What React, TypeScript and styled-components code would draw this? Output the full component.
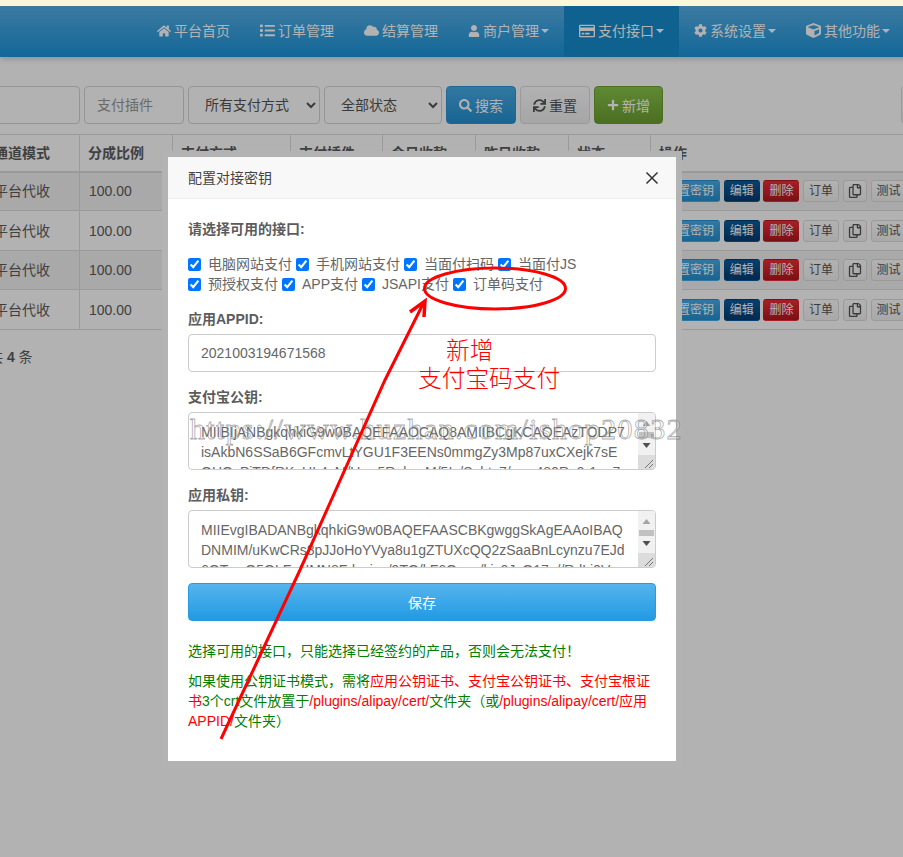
import React from "react";
import styled, { createGlobalStyle } from "styled-components";
import { FaHome, FaList, FaCloud, FaUser, FaRegCreditCard, FaCog, FaCube, FaSearch, FaSync, FaPlus, FaRegCopy } from "react-icons/fa";

const Global = createGlobalStyle`
  html, body { margin: 0; padding: 0; background: #fff; }
  body { font-family: "Liberation Sans", "Noto Sans CJK SC", sans-serif; font-size: 14px; line-height: 20px; color: #5c5c5c; }
  * { box-sizing: border-box; }
`;

const Page = styled.div`
  position: relative;
  width: 903px;
  height: 857px;
  overflow: hidden;
`;
const NoticeStrip = styled.div`
  position: relative;
  z-index: 3;
  height: 6px;
  background: #fdf7da;
`;
const NavBar = styled.nav`
  display: flex;
  height: 51px;
  width: 960px;
  padding-left: 142px;
  background: linear-gradient(#58b0e6, #1a94dc);
  box-shadow: 0 2px 6px rgba(0, 0, 0, 0.2);
`;
const NavItem = styled.a<{ $active?: boolean }>`
  display: flex;
  align-items: center;
  padding: 0 15px 2px;
  color: #fff;
  font-size: 14px;
  white-space: nowrap;
  background: ${(p) => (p.$active ? "#168dce" : "transparent")};
  svg { margin-right: 3px; flex: none; }
`;
const Caret = styled.i`
  width: 0;
  height: 0;
  margin-left: 2px;
  border-top: 4px solid #fff;
  border-left: 4px solid transparent;
  border-right: 4px solid transparent;
`;
const Toolbar = styled.div`
  display: flex;
  gap: 4px;
  width: 1000px;
  margin: 29px 0 0 -20px;
`;
const SearchInput = styled.input<{ $w: number }>`
  width: ${(p) => p.$w}px;
  height: 38px;
  padding: 0 12px;
  border: 1px solid #d6d6d6;
  border-radius: 4px;
  font: 14px "Liberation Sans", "Noto Sans CJK SC", sans-serif;
  &::placeholder { color: #999; }
`;
const SearchSelect = styled.select<{ $w: number }>`
  width: ${(p) => p.$w}px;
  height: 38px;
  padding: 0 12px;
  border: 1px solid #d6d6d6;
  border-radius: 4px;
  background: #fff;
  color: #555;
  font: 14px "Liberation Sans", "Noto Sans CJK SC", sans-serif;
`;
const ToolButton = styled.button<{ $kind: "blue" | "plain" | "green"; $w: number }>`
  display: flex;
  align-items: center;
  justify-content: center;
  gap: 3px;
  width: ${(p) => p.$w}px;
  height: 38px;
  padding: 0;
  border-radius: 4px;
  font: 14px "Liberation Sans", "Noto Sans CJK SC", sans-serif;
  border: 1px solid ${(p) => (p.$kind === "blue" ? "#2a92d6" : p.$kind === "green" ? "#6d9f31" : "#ddd")};
  color: ${(p) => (p.$kind === "plain" ? "#555" : "#fff")};
  background: ${(p) =>
    p.$kind === "blue"
      ? "linear-gradient(#48ade8, #2490d2)"
      : p.$kind === "green"
      ? "linear-gradient(#88c549, #6d9f31)"
      : "linear-gradient(#fff, #eee)"};
`;
const EdgeButton = styled(ToolButton)`
  margin-left: 234px;
`;
const TableWrap = styled.table`
  table-layout: fixed;
  width: 1009px;
  margin: 10px 0 0 -89px;
  border-collapse: collapse;
  th, td { text-align: left; border-left: 1px solid #ddd; }
  th { padding: 0 8px; height: 37px; font-weight: 700; border-top: 1px solid #ddd; border-bottom: 2px solid #ddd; white-space: nowrap; }
  td { padding: 0 9px; }
`;
const Row = styled.tr<{ $striped: boolean; $h: number }>`
  height: ${(p) => p.$h}px;
  background: ${(p) => (p.$striped ? "rgba(0,0,0,.05)" : "transparent")};
  td { border-bottom: 1px solid #ddd; white-space: nowrap; }
`;
const ModeCell = styled.td`
  && { padding-left: 82px; }
`;
const ModeHead = styled.th`
  && { padding-left: 82px; }
`;
const Actions = styled.div`
  display: flex;
  gap: 3.7px;
`;
const ActionButton = styled.span<{ $kind: "blue" | "navy" | "red" | "plain"; $tight?: boolean }>`
  display: flex;
  align-items: center;
  justify-content: center;
  height: 22px;
  padding: 0 ${(p) => (p.$tight ? 4 : 5)}px;
  border-radius: 3px;
  font-size: 12px;
  border: 1px solid ${(p) => (p.$kind === "plain" ? "#ddd" : "transparent")};
  color: ${(p) => (p.$kind === "plain" ? "#555" : "#fff")};
  background: ${(p) =>
    ({
      blue: "linear-gradient(#48ade8, #2490d2)",
      navy: "linear-gradient(#0b5c9f, #023c71)",
      red: "linear-gradient(#ed2e39, #b1171e)",
      plain: "linear-gradient(#fff, #f2f2f2)",
    }[p.$kind])};
`;
const Total = styled.div`
  margin: 17px 0 0 -11px;
  b { font-weight: 700; }
`;
const Backdrop = styled.div`
  position: absolute;
  inset: 6px 0 0 0;
  background: rgba(0, 0, 0, 0.3);
`;
const Modal = styled.div`
  position: absolute;
  left: 168px;
  top: 157px;
  width: 508px;
  height: 604px;
  background: #fff;
  box-shadow: 0 0 0 6px #b3b3b3;
`;
const ModalHead = styled.div`
  display: flex;
  align-items: center;
  justify-content: space-between;
  height: 42px;
  padding: 0 17px 0 20px;
  background: #f8f8f8;
  border-bottom: 1px solid #eee;
  color: #444;
`;
const ModalBody = styled.div`
  padding: 20px 20px 0;
`;
const FieldLabel = styled.div<{ $gap?: number }>`
  margin-bottom: ${(p) => p.$gap ?? 5}px;
  font-weight: 700;
  color: #5c5c5c;
`;
const Field = styled.div`
  margin-bottom: 15px;
`;
const CheckGroup = styled.div`
  display: flex;
  flex-wrap: wrap;
  column-gap: 4px;
`;
const CheckLabel = styled.label`
  display: flex;
  align-items: center;
  gap: 7px;
  height: 20px;
  color: #666;
  input { width: 13px; height: 13px; margin: 0; }
`;
const TextInput = styled.input`
  display: block;
  width: 100%;
  height: 38px;
  padding: 0 12px;
  border: 1px solid #ccc;
  border-radius: 4px;
  color: #666;
  font: 14px "Liberation Sans", "Noto Sans CJK SC", sans-serif;
`;
const KeyBox = styled.div`
  position: relative;
  height: 58px;
`;
const KeyArea = styled.textarea`
  display: block;
  width: 100%;
  height: 58px;
  padding: 9px 12px;
  border: 1px solid #ccc;
  border-radius: 4px;
  color: #666;
  white-space: pre;
  overflow: hidden;
  resize: none;
  font: 14px/20px "Liberation Sans", "Noto Sans CJK SC", sans-serif;
`;
const KeyScrollbar = styled.svg`
  position: absolute;
  top: 1px;
  right: 1px;
  border-radius: 0 3px 3px 0;
`;
const SaveButton = styled.button`
  display: block;
  width: 100%;
  height: 38px;
  border: 1px solid #2a9ae0;
  border-radius: 4px;
  color: #fff;
  background: linear-gradient(#55b4ed, #229ae3);
  font: 14px "Liberation Sans", "Noto Sans CJK SC", sans-serif;
`;
const Note = styled.p`
  margin: 20px 0 10px;
  color: green;
  & + & { margin-top: 0; }
  em { font-style: normal; color: red; }
`;
const Watermark = styled.div`
  position: absolute;
  left: 190px;
  top: 411px;
  font: 30px/36px "Liberation Serif", serif;
  letter-spacing: 1.36px;
  white-space: nowrap;
  color: rgba(255, 255, 255, 0.3);
  -webkit-text-stroke: 0.8px rgba(110, 110, 110, 0.6);
`;
const Callout = styled.div`
  position: absolute;
  left: 418px;
  top: 335px;
  width: 150px;
  color: red;
  font: 300 23.7px/28px "Noto Sans CJK SC", sans-serif;
  span { display: block; padding-left: 28px; }
`;
const Markup = styled.svg`
  position: absolute;
  inset: 0;
  pointer-events: none;
`;

const navItems: [React.ReactNode, string, boolean, boolean][] = [
  [<FaHome size={14} />, "平台首页", false, false],
  [<FaList size={15} />, "订单管理", false, false],
  [<FaCloud size={15} />, "结算管理", false, false],
  [<FaUser size={12} />, "商户管理", true, false],
  [<FaRegCreditCard size={16} />, "支付接口", true, true],
  [<FaCog size={13} />, "系统设置", true, false],
  [<FaCube size={15} />, "其他功能", true, false],
];
const heads = ["分成比例", "支付方式", "支付插件", "今日收款", "昨日收款", "状态", "操作"];
const widths = [168, 93, 118, 92, 93, 93, 82, 270];
const rowHeights = [39, 40, 39, 40];
const methods = ["电脑网站支付", "手机网站支付", "当面付扫码", "当面付JS", "预授权支付", "APP支付", "JSAPI支付", "订单码支付"];
const pubKey =
  "MIIBIjANBgkqhkiG9w0BAQEFAAOCAQ8AMIIBCgKCAQEAzTODP7\nisAkbN6SSaB6GFcmvLtYGU1F3EENs0mmgZy3Mp87uxCXejk7sE\nOHOyPiTDfRKuUL4cM/Uxw5RebvsM/5Iz/Sqhtc7/wqy480Rg9r1qe7";
const priKey =
  "MIIEvgIBADANBgkqhkiG9w0BAQEFAASCBKgwggSkAgEAAoIBAQ\nDNMIM/uKwCRs8pJJoHoYVya8u1gZTUXcQQ2zSaaBnLcynzu7EJd\n6OTvwO5OLFuUMN8Fdavjuz/9TQ/kF6Oveq/kjy0JyO17u//RdLj9Vo";

function FakeScrollbar() {
  return (
    <KeyScrollbar width="17" height="56" viewBox="0 0 17 56">
      <rect width="17" height="42" fill="#f1f1f1" />
      <path d="M8.5 8L12.5 13H4.5z" fill="#a3a3a3" />
      <rect x="1" y="19" width="15" height="6" fill="#c1c1c1" />
      <path d="M8.5 35L12.5 30H4.5z" fill="#505050" />
      <rect y="42" width="17" height="14" fill="#dcdcdc" />
      <path d="M15 47L7 55M15 51L11 55" stroke="#777" fill="none" />
    </KeyScrollbar>
  );
}

export default function App() {
  return (
    <Page>
      <Global />
      <NoticeStrip />
      <NavBar>
        {navItems.map(([icon, text, caret, active]) => (
          <NavItem key={text} $active={active}>
            {icon}
            {text}
            {caret && <Caret />}
          </NavItem>
        ))}
      </NavBar>
      <Toolbar>
        <SearchInput $w={100} />
        <SearchInput $w={100} placeholder="支付插件" />
        <SearchSelect $w={132} defaultValue="a">
          <option value="a">所有支付方式</option>
        </SearchSelect>
        <SearchSelect $w={118} defaultValue="a">
          <option value="a">全部状态</option>
        </SearchSelect>
        <ToolButton $kind="blue" $w={70}>
          <FaSearch size={13} />
          搜索
        </ToolButton>
        <ToolButton $kind="plain" $w={70}>
          <FaSync size={13} />
          重置
        </ToolButton>
        <ToolButton $kind="green" $w={69}>
          <FaPlus size={12} />
          新增
        </ToolButton>
        <EdgeButton $kind="plain" $w={60} />
      </Toolbar>
      <TableWrap>
        <colgroup>
          {widths.map((w, i) => (
            <col key={i} width={w} />
          ))}
        </colgroup>
        <thead>
          <tr>
            <ModeHead>通道模式</ModeHead>
            {heads.map((h) => (
              <th key={h}>{h}</th>
            ))}
          </tr>
        </thead>
        <tbody>
          {rowHeights.map((h, r) => (
            <Row key={r} $h={h} $striped={r % 2 === 0}>
              <ModeCell>平台代收</ModeCell>
              <td>100.00</td>
              <td />
              <td />
              <td />
              <td />
              <td />
              <td>
                <Actions>
                  <ActionButton $kind="blue">配置密钥</ActionButton>
                  <ActionButton $kind="navy">编辑</ActionButton>
                  <ActionButton $kind="red">删除</ActionButton>
                  <ActionButton $kind="plain">订单</ActionButton>
                  <ActionButton $kind="plain" $tight>
                    <FaRegCopy size={14} />
                  </ActionButton>
                  <ActionButton $kind="plain">测试</ActionButton>
                </Actions>
              </td>
            </Row>
          ))}
        </tbody>
      </TableWrap>
      <Total>
        共 <b>4</b> 条
      </Total>
      <Backdrop />
      <Modal>
        <ModalHead>
          配置对接密钥
          <svg width="14" height="14" viewBox="0 0 14 14" fill="none" stroke="#333" strokeWidth="1.5">
            <path d="M1.5 1.5l11 11M12.5 1.5l-11 11" />
          </svg>
        </ModalHead>
        <ModalBody>
          <Field>
            <FieldLabel $gap={15}>请选择可用的接口:</FieldLabel>
            <CheckGroup>
              {methods.map((m) => (
                <CheckLabel key={m}>
                  <input type="checkbox" defaultChecked />
                  {m}
                </CheckLabel>
              ))}
            </CheckGroup>
          </Field>
          <Field>
            <FieldLabel>应用APPID:</FieldLabel>
            <TextInput defaultValue="2021003194671568" />
          </Field>
          <Field>
            <FieldLabel>支付宝公钥:</FieldLabel>
            <KeyBox>
              <KeyArea defaultValue={pubKey} />
              <FakeScrollbar />
            </KeyBox>
          </Field>
          <Field>
            <FieldLabel>应用私钥:</FieldLabel>
            <KeyBox>
              <KeyArea defaultValue={priKey} />
              <FakeScrollbar />
            </KeyBox>
          </Field>
          <SaveButton>保存</SaveButton>
          <Note>{"选择可用的接口\uFF0C只能选择已经签约的产品\uFF0C否则会无法支付\uFF01"}</Note>
          <Note>
            {"如果使用公钥证书模式\uFF0C需将"}
            <em>应用公钥证书、支付宝公钥证书、支付宝根证书</em>3个crt文件放置于
            <em>/plugins/alipay/cert/</em>
            {"文件夹\uFF08或"}
            <em>/plugins/alipay/cert/应用APPID/</em>
            {"文件夹\uFF09"}
          </Note>
        </ModalBody>
      </Modal>
      <Watermark>https://www.huzhan.com/ishop20832</Watermark>
      <Callout>
        <span>新增</span>
        支付宝码支付
      </Callout>
      <Markup width="903" height="857" viewBox="0 0 903 857" fill="none" stroke="#f00" strokeWidth="3">
        <ellipse cx="495" cy="288.5" rx="70.5" ry="20.5" />
        <path d="M221 739L300 570L385 380L424 302" />
        <path d="M410 312L425 301L424 317" strokeWidth="3.5" />
      </Markup>
    </Page>
  );
}
